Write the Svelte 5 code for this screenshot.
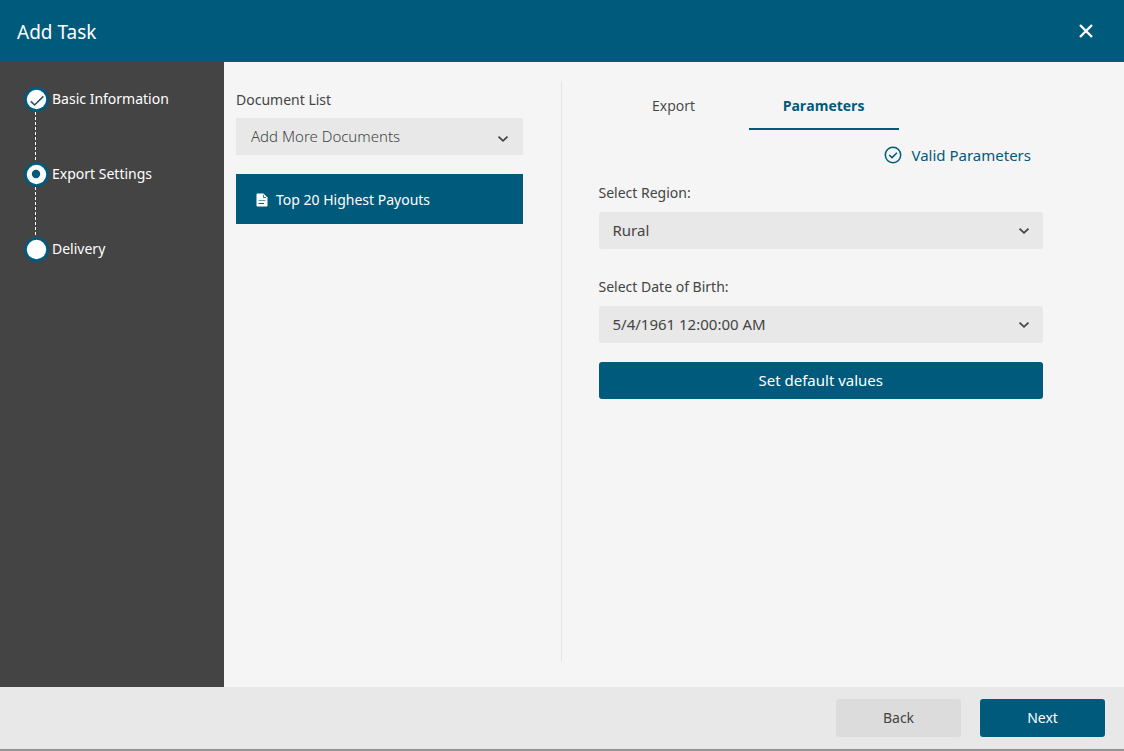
<script>
  const steps = [
    { label: 'Basic Information', status: 'done' },
    { label: 'Export Settings', status: 'current' },
    { label: 'Delivery', status: 'pending' }
  ];
  const tabs = ['Export', 'Parameters'];
  let activeTab = $state('Parameters');
  let region = $state('Rural');
  let birthDate = $state('5/4/1961 12:00:00 AM');

  function setDefaults() {
    region = 'Rural';
    birthDate = '5/4/1961 12:00:00 AM';
  }
</script>

{#snippet chevron()}
  <svg class="chevron" viewBox="0 0 12 8" width="12" height="8" aria-hidden="true">
    <path d="M1.5 1.7 L6 5.8 L10.5 1.7" fill="none" stroke="#444" stroke-width="1.8" />
  </svg>
{/snippet}

<div class="dialog">
  <header>
    <h1>Add Task</h1>
    <button class="close" type="button" aria-label="Close">
      <svg viewBox="0 0 16 16" width="16" height="16" aria-hidden="true">
        <path d="M2 2 L14 14 M14 2 L2 14" fill="none" stroke="#fff" stroke-width="2.4" />
      </svg>
    </button>
  </header>

  <div class="body">
    <nav>
      <ol>
        {#each steps as step}
          <li>
            <span class="marker">
              <svg viewBox="0 0 25 25" width="25" height="25" aria-hidden="true">
                <circle cx="12.5" cy="12.5" r="12.5" fill="#005a7c" />
                <circle cx="12.5" cy="12.5" r="9.7" fill="#fff" />
                {#if step.status === 'done'}
                  <path d="M6.8 14.4 L10.6 18 L19.4 9.4" fill="none" stroke="#2b5468" stroke-width="1.6" />
                {:else if step.status === 'current'}
                  <circle cx="12" cy="12" r="4.2" fill="#005a7c" />
                {/if}
              </svg>
            </span>
            <a href="#step">{step.label}</a>
          </li>
        {/each}
      </ol>
    </nav>

    <main>
      <section class="documents">
        <label for="add-doc">Document List</label>
        <div class="select square">
          <select id="add-doc"><option>Add More Documents</option></select>
          {@render chevron()}
        </div>
        <button class="document" type="button">
          <svg viewBox="0 0 12 14" width="12" height="14" aria-hidden="true">
            <path d="M1.5 0.5 H7.5 L11.5 4.5 V12.5 Q11.5 13.5 10.5 13.5 H1.5 Q0.5 13.5 0.5 12.5 V1.5 Q0.5 0.5 1.5 0.5 Z" fill="#fff" />
            <path d="M7.5 1.8 V4.5 H10" fill="none" stroke="#005a7c" stroke-width="0.8" />
            <path d="M2.5 7.5 H9.5" fill="none" stroke="#6d9db2" stroke-width="1" />
            <path d="M2.5 10.5 H8" fill="none" stroke="#005a7c" stroke-width="1" />
          </svg>
          Top 20 Highest Payouts
        </button>
      </section>

      <section class="settings">
        <div class="tabs" role="tablist">
          {#each tabs as tab}
            <button
              type="button"
              role="tab"
              aria-selected={activeTab === tab}
              class:active={activeTab === tab}
              onclick={() => (activeTab = tab)}>{tab}</button>
          {/each}
        </div>
        <p class="status">
          <svg viewBox="0 0 18 18" width="18" height="18" aria-hidden="true">
            <circle cx="9" cy="9" r="7.7" fill="none" stroke="#005a7c" stroke-width="1.5" />
            <path d="M5.2 9 L8 11.6 L13 6.8" fill="none" stroke="#005a7c" stroke-width="1.5" />
          </svg>
          Valid Parameters
        </p>
        <div class="fields">
          <div class="field">
            <label for="region">Select Region:</label>
            <div class="select">
              <select id="region" bind:value={region}><option>Rural</option></select>
              {@render chevron()}
            </div>
          </div>
          <div class="field">
            <label for="birth">Select Date of Birth:</label>
            <div class="select">
              <select id="birth" bind:value={birthDate}><option>5/4/1961 12:00:00 AM</option></select>
              {@render chevron()}
            </div>
          </div>
        </div>
        <button class="primary" type="button" onclick={setDefaults}>Set default values</button>
      </section>
    </main>
  </div>

  <footer>
    <button class="secondary" type="button">Back</button>
    <button class="primary" type="button">Next</button>
  </footer>
</div>

<style>
  :global(body) {
    margin: 0;
  }
  .dialog {
    display: flex;
    flex-direction: column;
    min-height: 100vh;
    box-sizing: border-box;
    border-bottom: 2px solid #959595;
    background: #f5f5f5;
    color: #444;
    font-family: 'Noto Sans', 'Open Sans', sans-serif;
    font-size: 14px;
    line-height: 20px;
  }
  button,
  select {
    font: inherit;
    color: inherit;
    border: 0;
    margin: 0;
    cursor: pointer;
  }
  svg {
    display: block;
    flex: none;
  }
  header {
    display: flex;
    align-items: center;
    justify-content: space-between;
    height: 62px;
    padding: 0 30px 0 17px;
    background: #005a7c;
    color: #fff;
  }
  h1 {
    margin: 0;
    padding-top: 2px;
    font-size: 19px;
    line-height: 28px;
    font-weight: 400;
  }
  .close {
    padding: 0;
    background: none;
  }
  .body {
    display: flex;
    flex: 1;
  }
  nav {
    flex: 0 0 224px;
    box-sizing: border-box;
    padding: 25px 24px;
    background: #444;
    color: #fff;
  }
  ol {
    list-style: none;
    margin: 0;
    padding: 0;
  }
  li {
    display: flex;
    gap: 3px;
    height: 75px;
  }
  .marker {
    display: flex;
    flex-direction: column;
    width: 25px;
  }
  li:not(:last-child) .marker::after {
    content: '';
    flex: 1;
    width: 1px;
    margin-left: 11px;
    background: repeating-linear-gradient(#fff 0 3px, transparent 3px 5px);
  }
  li a {
    color: inherit;
    text-decoration: none;
    line-height: 24px;
  }
  main {
    display: grid;
    grid-template-columns: 3fr 5fr;
    flex: 1;
    padding: 19px 0 26px;
  }
  .documents {
    padding: 9px 38px 0 12px;
    border-right: 1px solid #e4e4e4;
  }
  .settings {
    padding: 0 81px 0 37px;
  }
  label {
    display: block;
    margin-bottom: 8px;
  }
  .select {
    display: grid;
    align-items: center;
    border-radius: 3px;
    background: #e8e8e8;
    font-size: 15px;
  }
  .select > :global(*) {
    grid-area: 1 / 1;
  }
  .select select {
    width: 100%;
    height: 37px;
    padding: 0 40px 2px 14px;
    appearance: none;
    background: none;
  }
  .chevron {
    justify-self: end;
    margin-right: 13px;
    pointer-events: none;
  }
  .square {
    margin-bottom: 19px;
    border-radius: 0;
    font-weight: 300;
  }
  .square select {
    padding-left: 15px;
  }
  .square .chevron {
    margin: 5px 14px 0 0;
  }
  .document {
    display: flex;
    align-items: center;
    gap: 8px;
    width: 100%;
    height: 50px;
    padding: 2px 20px 0;
    background: #005a7c;
    color: #fff;
  }
  .tabs {
    display: flex;
  }
  .tabs button {
    width: 150px;
    height: 49px;
    padding: 2px 0 0;
    border-bottom: 2px solid transparent;
    background: none;
    font-family: 'Open Sans', sans-serif;
  }
  .tabs .active {
    border-color: #005a7c;
    color: #005a7c;
    font-weight: 700;
  }
  .status {
    display: flex;
    align-items: center;
    justify-content: flex-end;
    gap: 9px;
    margin: 15px 12px 18px 0;
    color: #005a7c;
    font-size: 15px;
  }
  .fields {
    display: grid;
    gap: 28px;
    margin-bottom: 19px;
  }
  .field label {
    margin-bottom: 9px;
  }
  .primary,
  .secondary {
    height: 38px;
    padding: 0;
    border-radius: 3px;
  }
  .primary {
    background: #005a7c;
    color: #fff;
  }
  .secondary {
    background: #dcdcdc;
  }
  .settings .primary {
    width: 100%;
    height: 37px;
    padding-bottom: 2px;
    font-size: 15px;
  }
  footer {
    display: flex;
    align-items: center;
    justify-content: flex-end;
    gap: 19px;
    height: 62px;
    padding-right: 19px;
    background: #e8e8e8;
  }
  footer button {
    width: 125px;
  }
</style>
